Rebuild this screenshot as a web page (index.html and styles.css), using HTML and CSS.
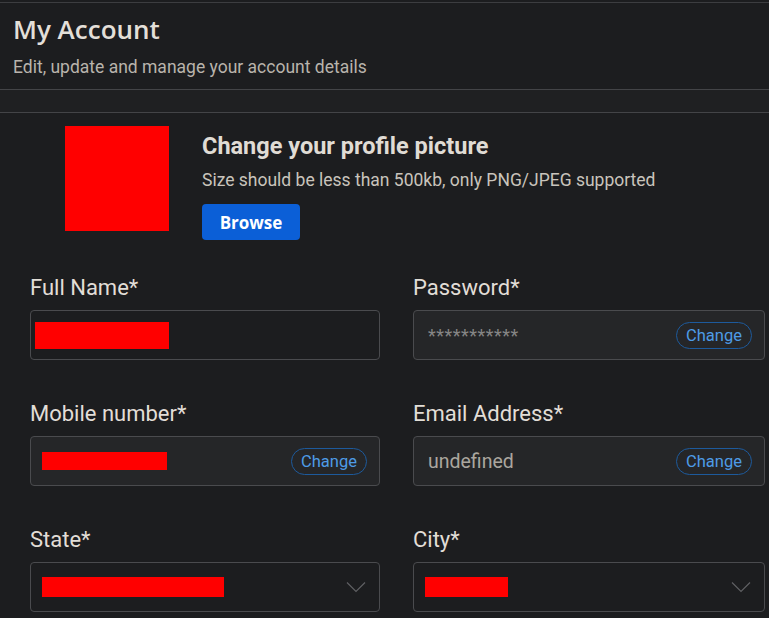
FILE: index.html
```html
<!DOCTYPE html>
<html lang="en">
<head>
<meta charset="utf-8">
<title>My Account</title>
<link rel="stylesheet" href="styles.css">
</head>
<body>
<div class="page">
  <header class="header">
    <h1 class="title">My Account</h1>
    <p class="subtitle">Edit, update and manage your account details</p>
  </header>
  <div class="band"></div>
  <section class="profile">
    <div class="avatar"></div>
    <div class="profile-info">
      <h2 class="profile-title">Change your profile picture</h2>
      <p class="profile-note">Size should be less than 500kb, only PNG/JPEG supported</p>
      <button class="browse">Browse</button>
    </div>
  </section>
  <form class="form">
    <div class="field">
      <label class="label">Full Name*</label>
      <div class="input"><span class="redact r-name"></span></div>
    </div>
    <div class="field">
      <label class="label">Password*</label>
      <div class="input filled"><span class="placeholder">***********</span><span class="pill">Change</span></div>
    </div>
    <div class="field">
      <label class="label">Mobile number*</label>
      <div class="input filled"><span class="redact r-mobile"></span><span class="pill">Change</span></div>
    </div>
    <div class="field">
      <label class="label">Email Address*</label>
      <div class="input filled"><span class="value">undefined</span><span class="pill">Change</span></div>
    </div>
    <div class="field">
      <label class="label">State*</label>
      <div class="input select"><span class="redact r-state"></span>
        <svg class="chev" width="20" height="12" viewBox="0 0 20 12"><path d="M1 1.5 L10 10.5 L19 1.5" fill="none" stroke="#5f6063" stroke-width="1.2"/></svg>
      </div>
    </div>
    <div class="field">
      <label class="label">City*</label>
      <div class="input select"><span class="redact r-city"></span>
        <svg class="chev" width="20" height="12" viewBox="0 0 20 12"><path d="M1 1.5 L10 10.5 L19 1.5" fill="none" stroke="#5f6063" stroke-width="1.2"/></svg>
      </div>
    </div>
  </form>
</div>
</body>
</html>
```

FILE: styles.css
```css
* { box-sizing: border-box; }
html, body { margin: 0; padding: 0; }
body {
  background: #1c1d1f;
  font-family: Roboto, "Liberation Sans", sans-serif;
  color: #e2ded7;
  overflow: hidden;
}
.page {
  width: 769px;
  height: 618px;
  padding-top: 2px;
}
.header {
  border-top: 1px solid #3c3d40;
  padding: 10px 13px 0;
  height: 88px;
  border-bottom: 1px solid #434447;
}
.title {
  margin: 0;
  font-family: "Open Sans", sans-serif;
  font-weight: 600;
  font-size: 26px;
  line-height: 32px;
  color: #e3dfd8;
}
.subtitle {
  margin: 11px 0 0;
  font-size: 17.5px;
  line-height: 22px;
  color: #b9b4ac;
}
.band {
  height: 23px;
  background: #1f2022;
  border-bottom: 1px solid #434447;
}
.profile {
  display: flex;
  gap: 33px;
  padding: 13px 0 0 65px;
  height: 162px;
}
.avatar {
  width: 104px;
  height: 105px;
  background: #ff0000;
  flex: none;
}
.profile-info {
  display: flex;
  flex-direction: column;
  align-items: flex-start;
}
.profile-title {
  margin: 5px 0 0;
  font-size: 23.5px;
  line-height: 30px;
  font-weight: 700;
  color: #e0dcd5;
}
.profile-note {
  margin: 8px 0 0;
  font-size: 17.5px;
  line-height: 22px;
  color: #c9c4bc;
}
.browse {
  margin-top: 13px;
  width: 98px;
  height: 36px;
  border: none;
  border-radius: 4px;
  background: #0b5fd7;
  color: #ffffff;
  font-family: "Open Sans", sans-serif;
  font-weight: 700;
  font-size: 17px;
  padding: 0;
}
.form {
  display: grid;
  grid-template-columns: 350px 352px;
  column-gap: 33px;
  row-gap: 41px;
  padding-left: 30px;
}
.field {
  display: flex;
  flex-direction: column;
}
.label {
  font-size: 22px;
  line-height: 26px;
  color: #e2ded7;
  margin-bottom: 9px;
}
.input {
  height: 50px;
  border: 1px solid #4a4b4e;
  border-radius: 4px;
  background: #1c1d1f;
  display: flex;
  align-items: center;
  padding: 0 12px 0 14px;
}
.input.filled { background: #252628; }
.placeholder {
  font-size: 18px;
  color: #858585;
  flex: 1;
  letter-spacing: 0.5px;
}
.value {
  font-size: 19.5px;
  color: #aba69f;
  flex: 1;
}
.pill {
  height: 27px;
  width: 76px;
  border: 1px solid #1d5a9c;
  border-radius: 14px;
  color: #4e9be6;
  font-size: 16.5px;
  display: flex;
  align-items: center;
  justify-content: center;
  flex: none;
}
.redact { background: #ff0000; display: block; }
.r-name { width: 134px; height: 27px; margin-left: -10px; }
.r-mobile { width: 125px; height: 18px; margin-left: -3px; flex: none; margin-right: auto; }
.r-state { width: 182px; height: 20px; margin-left: -3px; margin-right: auto; }
.r-city { width: 83px; height: 20px; margin-left: -3px; margin-right: auto; }
.select { padding-right: 13px; }
.chev { flex: none; }
```
